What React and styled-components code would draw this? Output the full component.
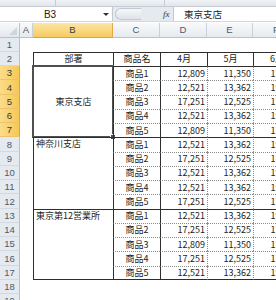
import React from 'react';
import styled, { createGlobalStyle } from 'styled-components';

const Global = createGlobalStyle`
  html, body { margin: 0; padding: 0; background: #fff; overflow: hidden; }
  * { box-sizing: border-box; }
  body { font-family: "Noto Sans CJK JP", "Liberation Sans", sans-serif; }
`;

const Frame = styled.div`
  width: 276px;
  height: 300px;
  overflow: hidden;
  display: flex;
  flex-direction: column;
  background: #fff;
`;

const Ribbon = styled.div`
  flex: none;
  height: 7px;
  display: grid;
  grid-template-columns: 56px 109px 1fr;
  background: linear-gradient(#f1f3f6, #e2e6eb);
  border-bottom: 1px solid #c6ccd4;
`;

const RibbonPart = styled.div`
  border-right: 1px solid #c6ccd4;
`;

const FormulaRow = styled.div`
  flex: none;
  height: 15px;
  display: flex;
  background: #e6e9ee;
  border-bottom: 1px solid #d3d8de;
`;

const NameBox = styled.div`
  width: 113px;
  display: grid;
  grid-template-columns: 1fr 12px;
  align-items: center;
  background: #fff;
  border-right: 1px solid #c3c9d1;
  font: 10px "Liberation Sans", sans-serif;
  color: #222;
`;

const NameText = styled.span`
  text-align: center;
`;

const DropArrow = styled.span`
  justify-self: center;
  width: 0;
  height: 0;
  border-left: 3px solid transparent;
  border-right: 3px solid transparent;
  border-top: 3px solid #333;
`;

const FxArea = styled.div`
  width: 60px;
  display: flex;
  align-items: center;
  padding-left: 2px;
`;

const Bump = styled.div`
  width: 26px;
  height: 12px;
  border: 1px solid #c2c8d0;
  border-right: none;
  border-radius: 7px 0 0 7px;
  background: linear-gradient(#f6f7f9, #dfe3e8);
`;

const Fx = styled.span`
  margin-left: 22px;
  font: italic 9px "Liberation Serif", serif;
  color: #333;
`;

const FormulaInput = styled.div`
  flex: 1;
  display: flex;
  align-items: center;
  padding-left: 10px;
  background: #fff;
  border-left: 1px solid #c3c9d1;
  font-size: 9.5px;
  color: #222;
`;

const Sheet = styled.div`
  margin-top: 1px;
  display: grid;
  grid-template-columns: 20px 13px 80px 47px 47px 46px 47px;
  grid-template-rows: 14.7px repeat(19, 14.25px);
`;

const Corner = styled.div`
  position: relative;
  background: linear-gradient(#f7f9fb, #e3e8ee);
  border-right: 1px solid #b8c3d0;
  border-bottom: 1px solid #b8c3d0;
`;

const CornerTri = styled.span`
  position: absolute;
  right: 2px;
  bottom: 2px;
  width: 0;
  height: 0;
  border-left: 8px solid transparent;
  border-bottom: 8px solid #cfd5dc;
`;

const ColHeader = styled.div`
  display: flex;
  align-items: center;
  justify-content: center;
  font: 9.5px "Liberation Sans", sans-serif;
  color: ${p => (p.$sel ? '#3a3a3a' : '#4d5a68')};
  background: ${p =>
    p.$sel ? 'linear-gradient(#fbe6a6, #f6cb5e)' : 'linear-gradient(#f8f9fb, #e6eaef)'};
  border-right: 1px solid ${p => (p.$sel ? '#e3aa45' : '#c9d0d8')};
  border-bottom: 1px solid ${p => (p.$sel ? '#e3a23a' : '#b8c3d0')};
`;

const RowHeader = styled.div`
  display: flex;
  align-items: center;
  justify-content: center;
  font: 9.5px "Liberation Sans", sans-serif;
  color: ${p => (p.$sel ? '#3a3a3a' : '#4d5a68')};
  background: ${p => (p.$sel ? 'linear-gradient(90deg, #fbdc8a, #f6c955)' : '#e5eaf0')};
  border-right: 1px solid ${p => (p.$sel ? '#e3a23a' : '#b8c3d0')};
  border-bottom: 1px solid ${p => (p.$sel ? '#edc26a' : '#d2d9e1')};
`;

const line = k =>
  k === 'solid' ? '1px solid #2e2e2e' : k === 'dot' ? '1px dotted #8c8c8c' : '1px solid transparent';

const Cell = styled.div`
  position: relative;
  display: flex;
  align-items: ${p => (p.$top_align ? 'flex-start' : 'center')};
  justify-content: ${p =>
    p.$align === 'right' ? 'flex-end' : p.$align === 'left' ? 'flex-start' : 'center'};
  padding: ${p => (p.$align === 'right' ? '0 2px 0 0' : p.$align === 'left' ? '0 0 0 2px' : '0')};
  grid-row: ${p => (p.$span ? `span ${p.$span}` : 'auto')};
  border-top: ${p => line(p.$t)};
  border-left: ${p => line(p.$l)};
  border-bottom: ${p => (p.$b ? line(p.$b) : 'none')};
  font-size: 9px;
  line-height: 12.5px;
  color: #1c1c1c;
  white-space: nowrap;
`;

const Selection = styled.div`
  position: absolute;
  left: -2px;
  top: -2px;
  right: -1px;
  bottom: -1px;
  border: 2px solid #505050;
  pointer-events: none;
`;

const FillHandle = styled.span`
  position: absolute;
  right: -4px;
  bottom: -4px;
  width: 6px;
  height: 6px;
  background: #505050;
  border: 1px solid #fff;
`;

const data = [
  ['12,809', '11,350', '17,425'],
  ['12,521', '13,362', '19,058'],
  ['17,251', '12,525', '17,425'],
  ['12,521', '13,362', '19,058'],
  ['12,809', '11,350', '17,425'],
  ['12,521', '13,362', '19,058'],
  ['17,251', '12,525', '17,425'],
  ['12,521', '13,362', '19,058'],
  ['12,521', '13,362', '19,058'],
  ['17,251', '12,525', '17,425'],
  ['12,521', '13,362', '19,058'],
  ['17,251', '12,525', '17,425'],
  ['12,809', '11,350', '17,425'],
  ['17,251', '12,525', '17,425'],
  ['12,521', '13,362', '19,058'],
];

const groups = ['東京支店', '神奈川支店', '東京第12営業所'];

function Empty({ n }) {
  return Array.from({ length: n }, (_, i) => <Cell key={i} />);
}

export default function App() {
  const rows = [];
  // row 1
  rows.push(
    <React.Fragment key="r1">
      <RowHeader>1</RowHeader>
      <Empty n={6} />
    </React.Fragment>
  );
  // row 2 header
  rows.push(
    <React.Fragment key="r2">
      <RowHeader>2</RowHeader>
      <Cell />
      <Cell $t="solid" $l="solid">部署</Cell>
      <Cell $t="solid" $l="solid">商品名</Cell>
      <Cell $t="solid" $l="solid">4月</Cell>
      <Cell $t="solid" $l="solid">5月</Cell>
      <Cell $t="solid" $l="solid">6月</Cell>
    </React.Fragment>
  );
  data.forEach((d, i) => {
    const r = i + 3;
    const first = i % 5 === 0;
    const last = r === 17;
    const g = Math.floor(i / 5);
    const t = first ? 'solid' : 'dot';
    const b = last ? 'solid' : undefined;
    rows.push(
      <React.Fragment key={r}>
        <RowHeader $sel={r >= 3 && r <= 7}>{r}</RowHeader>
        <Cell />
        {first && (
          <Cell
            $span={5}
            $t="solid"
            $l="solid"
            $b={g === 2 ? 'solid' : undefined}
            $align={g === 0 ? 'center' : 'left'}
            $top_align={g !== 0}
          >
            {groups[g]}
            {g === 0 && (
              <Selection>
                <FillHandle />
              </Selection>
            )}
          </Cell>
        )}
        <Cell $t={t} $l="solid" $b={b}>{`商品${(i % 5) + 1}`}</Cell>
        <Cell $t={t} $l="solid" $b={b} $align="right">{d[0]}</Cell>
        <Cell $t={t} $l="dot" $b={b} $align="right">{d[1]}</Cell>
        <Cell $t={t} $l="dot" $b={b} $align="right">{d[2]}</Cell>
      </React.Fragment>
    );
  });
  [18, 19].forEach(r =>
    rows.push(
      <React.Fragment key={r}>
        <RowHeader>{r}</RowHeader>
        <Empty n={6} />
      </React.Fragment>
    )
  );

  return (
    <Frame>
      <Global />
      <Ribbon>
        <RibbonPart />
        <RibbonPart />
        <div />
      </Ribbon>
      <FormulaRow>
        <NameBox>
          <NameText>B3</NameText>
          <DropArrow />
        </NameBox>
        <FxArea>
          <Bump />
          <Fx>fx</Fx>
        </FxArea>
        <FormulaInput>東京支店</FormulaInput>
      </FormulaRow>
      <Sheet>
        <Corner>
          <CornerTri />
        </Corner>
        <ColHeader>A</ColHeader>
        <ColHeader $sel>B</ColHeader>
        <ColHeader>C</ColHeader>
        <ColHeader>D</ColHeader>
        <ColHeader>E</ColHeader>
        <ColHeader>F</ColHeader>
        {rows}
      </Sheet>
    </Frame>
  );
}
